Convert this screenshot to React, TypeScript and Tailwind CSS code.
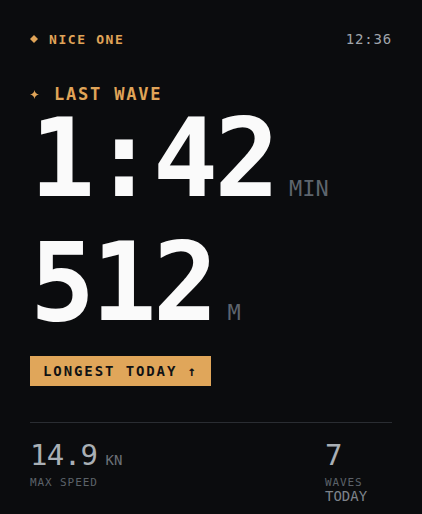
import React from 'react'

const mono = "font-['DejaVu_Sans_Mono','Liberation_Mono',monospace]"

const Diamond = () => (
  <svg width="8" height="8" viewBox="0 0 8 8" className="shrink-0">
    <path d="M4 0 L8 4 L4 8 L0 4 Z" fill="#e0a458" />
  </svg>
)

const Sparkle = () => (
  <svg width="9" height="9" viewBox="0 0 10 10" className="shrink-0">
    <path d="M5 0 Q5.6 4.4 10 5 Q5.6 5.6 5 10 Q4.4 5.6 0 5 Q4.4 4.4 5 0 Z" fill="#e0a458" />
  </svg>
)

export default function App() {
  return (
    <div className={`${mono} min-h-[514px] w-full bg-[#0b0c0e] px-[30px] pt-[32px]`}>
      {/* header */}
      <div className="flex items-center justify-between">
        <div className="flex items-center gap-[11px]">
          <Diamond />
          <span className="text-[13px] leading-none font-semibold tracking-[1.6px] text-[#e0a458]">NICE ONE</span>
        </div>
        <span className="text-[14px] leading-none font-medium tracking-[0.8px] text-[#a0a5ab]">12:36</span>
      </div>

      {/* last wave */}
      <div className="mt-[40px] flex items-center gap-[15px]">
        <Sparkle />
        <span className="text-[17px] leading-none font-semibold tracking-[1.8px] text-[#e0a458]">LAST WAVE</span>
      </div>

      <div className="mt-[2px] flex items-baseline gap-[13px]">
        <span className="text-[108px] leading-none font-bold tracking-[-3.5px] text-[#fafafa]">1:42</span>
        <span className="text-[22px] leading-none text-[#5e656d]">MIN</span>
      </div>

      <div className="mt-[16px] flex items-baseline gap-[13px]">
        <span className="text-[108px] leading-none font-bold tracking-[-3.5px] text-[#fafafa]">512</span>
        <span className="text-[22px] leading-none text-[#5e656d]">M</span>
      </div>

      <div className="mt-[19px] inline-flex h-[30px] items-center bg-[#e0a65a] px-[13px]">
        <span className="text-[14px] leading-none font-bold tracking-[1.9px] text-[#111214]">LONGEST TODAY ↑</span>
      </div>

      <div className="mt-[36px] border-t border-[#2a2d32]" />

      {/* stats */}
      <div className="mt-[18px] flex justify-between">
        <div className="flex flex-col">
          <div className="flex items-baseline gap-[8px]">
            <span className="text-[29px] leading-none tracking-[-0.6px] text-[#a9afb5]">14.9</span>
            <span className="text-[14px] leading-none text-[#6b7178]">KN</span>
          </div>
          <span className="mt-[7px] text-[11px] leading-none tracking-[0.9px] text-[#5c6269]">MAX SPEED</span>
        </div>
        <div className="flex w-[67px] flex-col">
          <span className="text-[29px] leading-none text-[#a9afb5]">7</span>
          <span className="mt-[7px] text-[11px] leading-none tracking-[0.9px] text-[#5c6269]">WAVES</span>
          <span className="mt-[1px] text-[14px] leading-none text-[#7d838a]">TODAY</span>
        </div>
      </div>
    </div>
  )
}
